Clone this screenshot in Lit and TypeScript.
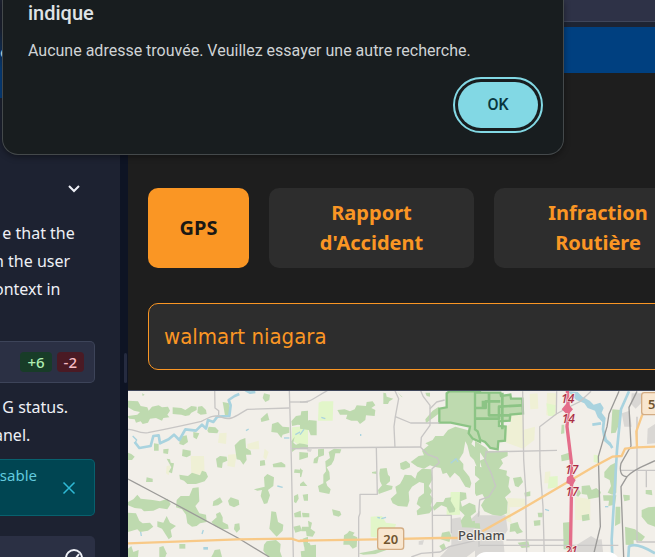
import { LitElement, html, svg, css } from "lit";
import { customElement } from "lit/decorators.js";

// Map features are grouped in three tiles, each 540 units wide.
const westWoods = [
  "0,62 30,64 38,78 58,82 62,92 72,80 92,76 102,82 120,80 126,92 118,104 124,112 106,114 102,122 84,114 66,116 60,128 44,132 38,124 24,128 20,118 4,116 0,112 0,108 28,104 36,96 18,92 0,82",
  "134,82 160,84 172,90 190,78 206,80 206,90 190,98 184,106 172,108 160,104 134,102",
  "210,80 222,78 234,90 236,102 218,104 208,98",
  "242,140 262,142 272,152 268,160 242,158 238,152", "156,170 176,166 180,186 166,196 154,192",
  "78,190 92,192 92,212 78,212", "106,208 122,206 120,222 106,220", "164,208 188,212 188,226 176,232 162,228",
  "0,218 10,222 20,230 12,240 0,240", "56,292 74,296 74,306 54,306",
  "154,284 180,288 192,278 216,286 222,272 234,276 240,290 230,304 204,312 178,312 168,302 156,298",
  "0,366 16,358 28,344 38,356 74,360 96,364 118,356 128,372 118,388 94,384 76,392 48,394 40,386 20,384 0,376",
  "0,398 24,400 34,422 44,430 66,428 76,440 60,452 36,456 28,448 0,456",
  "88,424 106,428 116,408 126,428 144,438 128,450 132,470 122,478 112,462 102,446 88,440",
  "146,360 158,348 184,348 194,324 212,322 214,364 202,378 214,400 234,404 236,426 216,430 206,438 192,440 178,430 174,404 162,388 144,382",
  "256,364 276,352 284,366 270,376 254,378", "300,362 308,352 332,360 334,374 318,382 304,376",
  "250,426 266,412 264,402 276,396 284,412 284,426 300,434 302,446 284,448 264,440",
  "320,432 334,430 336,448 326,458 318,448", "264,236 276,228 296,230 298,242 284,248 282,264 268,262",
  "320,196 336,180 352,174 354,204 368,212 370,224 354,224 356,240 346,254 336,240 326,238",
  "408,292 418,282 438,292 436,318 420,330 426,346 418,370 408,372 398,348 402,330 388,332 378,328 410,320",
  "428,416 430,394 444,396 450,426 466,434 464,452 446,470 436,460 424,446",
  "408,494 416,484 444,480 458,492 456,514 462,531 420,531 406,512",
  "408,40 426,44 424,60 412,66 404,54", "398,116 418,98 424,120 400,126",
  "432,132 450,126 464,140 484,142 484,158 464,164 460,174 448,158 430,156",
  "396,242 410,240 412,256 396,258", "434,252 460,246 472,254 472,262 436,262",
  "490,124 504,108 518,106 520,94 540,92 540,138 510,134 492,138", "500,170 496,188 504,194 516,190 540,194 540,206 508,204 492,216 490,184",
  "514,216 540,218 540,232 514,240", "500,268 524,270 520,280 498,278", "498,348 510,342 512,356 504,370 498,366",
  "524,344 540,342 540,362 528,362", "498,400 518,392 520,412 500,412", "496,440 516,436 522,452 502,458",
  "154,492 172,492 172,506 154,506", "0,506 10,498 16,516 32,510 30,531 0,531", "94,502 106,498 116,520 112,531 94,531",
  "116,236 126,238 128,248 138,250 136,260 132,280 122,276 130,262", "260,510 276,508 282,531 250,531 256,520", "524,476 540,470 540,500 528,500",
  "284,66 304,70 306,104 292,112", "196,156 214,160 206,178 196,172", "42,40 50,44 44,48",
];
const midWoods = [
  "112,90 134,88 150,94 164,88 170,76 198,78 200,66 218,64 226,76 214,84 226,90 224,108 198,106 196,120 180,132 172,122 154,122 138,116 142,104 120,104",
  "0,126 18,132 26,120 50,122 50,166 32,166 26,150 0,146", "250,38 258,40 260,50 280,56 268,64 264,72 250,72", "376,38 390,38 390,50 380,48",
  "54,208 72,206 72,226 56,232 52,250 40,250 42,236 54,228",
  "86,216 102,206 124,208 120,220 106,220 102,240 94,254 80,262 88,276 90,298 78,306 82,318 92,328 88,342 58,336 54,318 70,310 70,284 78,274 76,244 90,234",
  "0,264 8,272 4,290 0,292", "0,312 10,304 22,318 0,318", "96,388 120,394 124,404 116,410 100,406", "6,398 28,400 28,412 8,412",
  "24,422 36,428 32,446 46,456 38,470 20,468 18,454 4,454 6,440 26,440", "132,466 142,460 148,452 164,458 158,466 172,472 170,500 158,506 148,494 130,494",
  "12,492 28,488 32,496 48,494 48,531 4,531 2,514 14,512",
  "238,280 240,266 260,264 264,284 270,290 270,304 258,314 278,318 276,328 236,342 234,330 246,316 240,304",
  "300,250 318,242 330,252 330,262 310,270 302,266", "216,276 230,274 230,282 216,280",
  "272,356 290,340 286,320 300,312 308,298 314,284 334,286 346,296 352,278 366,266 394,268 398,298 386,318 396,332 390,344 400,356 392,376 398,388 388,400 352,406 350,392 362,382 350,372 356,352 372,340 372,310 358,306 336,320 326,336 328,362 322,380 294,378 278,370",
  "332,246 356,228 372,226 366,212 386,196 376,190 398,180 406,168 430,168 444,150 466,140 510,152 508,166 520,180 514,192 528,204 540,202 540,266 530,260 522,240 510,228 502,196 496,184 490,218 478,238 490,252 490,268 508,290 514,310 510,324 496,320 478,290 464,278 450,294 440,278 428,282 422,264 402,260 390,256 372,266 352,260",
  "398,382 410,366 430,366 436,354 454,352 452,362 466,386 464,396 448,398 440,382 424,376 402,392",
  "480,336 498,338 500,356 482,364 486,380 508,368 526,376 528,396 512,408 516,424 540,420 540,444 486,442 482,422 494,406 478,390",
  "376,118 398,92 416,80 418,100 402,112 378,130", "426,458 448,454 454,468 448,486 422,478", "418,498 432,490 438,504 428,514",
  "176,520 218,512 240,506 270,506 226,522 190,524", "292,36 308,52 304,50",
];
const eastWoods = [
  "0,182 34,204 40,214 98,212 98,228 78,238 84,250 72,266 96,272 94,286 104,292 100,320 108,336 90,352 98,366 96,400 78,408 52,404 28,394 18,376 30,356 22,342 4,348 0,340 0,310 14,298 0,286 0,258 20,262 14,242 28,236 16,218 0,204",
  "260,134 268,134 268,160 258,162", "388,276 406,256 426,246 424,338 412,344 398,338 408,318 404,300 388,292", "320,318 344,316 350,330 364,324 378,336 372,352 340,358 336,344 320,342",
  "412,88 436,90 436,124 422,158 408,160", "384,346 424,346 420,374 400,378 402,362 386,362",
  "422,380 436,380 436,430 420,438", "264,428 286,426 290,508 266,508", "114,294 138,290 144,306 130,322 120,318", "106,432 128,426 134,444 144,456 126,462 120,454 104,456",
  "444,344 464,346 464,360 448,364", "450,440 480,448 510,470 500,484 476,480 476,496 452,494", "540,440 518,432 500,410 500,390 520,382 540,380",
  "308,320 318,340 310,350 304,348", "512,330 530,330 532,346 512,342", "188,398 204,398 202,412 190,412", "148,338 166,334 166,348 150,350", "320,406 342,402 344,420 322,424", "128,488 160,484 164,502 140,504", "176,422 196,420 196,436 178,438", "258,226 282,218 290,238 260,244", "0,430 14,430 16,446 0,444",
];
const reserveMid = "448,34 540,34 540,186 518,176 506,160 510,140 452,128 418,128 418,86 440,82 440,40";
const reserveEast = "0,38 76,38 78,48 106,44 108,56 142,56 144,100 106,104 104,122 72,124 72,138 92,140 90,182 70,184 68,208 46,204 30,186 16,180 8,154 0,148";

const area = (pts: string[], cls: string) => pts.map((p) => svg`<polygon class=${cls} points=${p} />`);
const lines = (ds: string[], cls: string) => ds.map((d) => svg`<path class=${cls} d=${d} />`);

@customElement("town-map")
class TownMap extends LitElement {
  static styles = css`
    :host { display: block; overflow: hidden; background: #f2efe9; }
    svg { display: block; width: 100%; height: 100%; }
    .wood { fill: #bedaaf; }
    .park { fill: #e2f6c9; }
    .farm { fill: #eff0d5; }
    .town { fill: #d9d7d4; }
    .reserve { fill: #bedaaf; stroke: #8cc485; stroke-width: 7; }
    .reserve-line, .road, .rail, .river, .stream, .main, .toll { fill: none; stroke-linejoin: round; }
    .reserve-line { stroke: #8cc485; stroke-width: 8; }
    .road { stroke: #c8c6c5; stroke-width: 4; }
    .rail { stroke: #9b9a98; stroke-width: 4; }
    .river { stroke: #a9d3df; stroke-width: 8; }
    .stream { stroke: #a9d3df; stroke-width: 4; }
    .water { fill: #a9d3df; }
    .main { stroke: #f8c987; stroke-width: 7; }
    .toll { stroke: #e46d8a; stroke-width: 10; }
    .exit { fill: #e46d8a; }
    .shield { fill: #f8e6cf; stroke: #d3ac83; stroke-width: 4; }
    text { font-family: "Noto Sans", sans-serif; }
    .shield-no { font-size: 39px; font-weight: 600; fill: #70552f; text-anchor: middle; }
    .exit-no { font-size: 36px; font-style: italic; font-weight: 500; fill: #a92d42; text-anchor: middle; stroke: #f6e9e6; stroke-width: 4; paint-order: stroke; }
    .place { font-size: 13px; font-weight: 500; fill: #4c4c4c; stroke: #f2efe9; stroke-width: 2; paint-order: stroke; }
  `;
  render() {
    return html`<svg viewBox="128 391 527 166" preserveAspectRatio="xMinYMin slice" role="img" aria-label="Carte de Pelham">
      <g transform="translate(128 380) scale(0.33333)">
        ${area(["188,228 228,228 230,284 190,284", "274,160 296,158 294,192 270,188", "300,224 326,222 320,262 298,258", "358,192 392,182 394,208 358,208", "410,206 422,216 414,240 406,232", "116,258 128,256 122,286 114,280"], "farm")}
        ${area(["492,142 540,138 540,192 512,196 492,180"], "park")}
        ${area(westWoods, "wood")}
        ${lines(["M20 186L34 204L68 198L76 168L92 166L96 190L122 178L138 164L154 180L172 148L204 152L222 134L234 146L240 120L256 126L268 110L304 108L308 76L302 60L320 48L334 42", "M352 30L366 38L382 36"], "river")}
        ${lines(["M14 168L26 180L20 190", "M502 164L516 156L520 166L528 148", "M448 318L464 322", "M38 456L40 468", "M226 450L222 462", "M468 174L484 174", "M354 152L362 147"], "stream")}
        <rect class="water" x="226" y="501" width="14" height="8" />
        ${lines(["M0 148C20 146 30 162 60 158C110 148 160 138 220 124C250 108 260 104 282 112C310 122 320 110 358 88L484 84", "M260 30L261 84L272 92L272 106", "M484 30L490 240L496 531", "M486 66H540", "M492 206H540"], "road")}
        ${lines(["M0 297L130 366L330 474L424 531"], "rail")}
        ${lines(["M0 490L330 478L490 476L512 483L540 482"], "main")}
      </g>
      <g transform="translate(300 380) scale(0.33333)">
        ${area(["66,64 100,64 98,122 54,122 56,68", "0,146 20,136 24,178 10,190 0,190", "212,410 246,408 258,428 288,432 284,446 248,442 238,474 212,470", "452,336 480,336 480,404 440,406 440,382 450,374"], "park")}
        ${area(["454,416 482,412 486,442 540,392 540,500 500,531 420,531 454,494", "356,484 372,480 368,494 356,494", "20,206 36,208 32,216 22,214"], "town")}
        ${area(midWoods, "wood")}
        <polygon class="reserve" points=${reserveMid} />
        ${lines(["M64 112L76 116", "M0 164L12 148", "M232 412L240 414", "M244 416L258 412", "M452 250L468 236L474 246", "M182 162V168"], "stream")}
        ${lines(["M0 66C34 68 40 54 82 32", "M284 30L296 56L286 110L282 140L285 204", "M286 110L332 129H418", "M0 204L362 201", "M362 32L370 50L390 76V136L364 172L362 202L384 224L412 234L418 248L396 266L398 531", "M390 86L410 66L434 60", "M229 204L232 343H180V400L176 412V531", "M398 406H454V460", "M334 531L364 520L420 516L448 500L500 488L540 478"], "road")}
        ${lines(["M0 482L230 478L420 474L474 474"], "main")}
        <rect class="shield" x="233" y="444" width="78" height="64" rx="8" />
        <text class="shield-no" x="272" y="491">20</text>
      </g>
      <g transform="translate(475 380) scale(0.33333)">
        ${area(["108,100 146,96 144,150 180,140 178,180 144,206 94,188 92,140 106,132", "216,38 244,40 244,108 214,106", "96,354 152,356 152,380 100,382", "164,42 188,40 190,86 166,88", "102,370 110,430 90,420", "300,350 346,358 346,420 300,420", "210,276 226,274 226,310 208,310"], "farm")}
        ${area(["222,290 248,288 248,322 218,326", "356,224 374,226 370,250 356,246", "214,70 242,76 238,108 220,108"], "park")}
        ${area(["0,406 92,406 98,450 84,472 90,531 0,531", "296,500 348,468 368,480 364,531 290,531", "440,100 464,92 470,140 448,140", "518,146 540,132 540,190 516,192", "356,480 380,478 386,531 350,531", "470,40 500,40 502,66 482,86 468,72"], "town")}
        ${area(eastWoods, "wood")}
        <polygon class="reserve" points=${reserveEast} />
        ${lines(["M0 84H32V64H76M42 38V106H108M0 116H72V80L140 76M82 38V148M24 62V88"], "reserve-line")}
        <polygon class="water" points="278,34 308,36 322,50 344,62 356,74 376,68 386,84 380,98 392,114 388,148 396,178 408,188 404,198 386,182 380,148 382,126 368,112 360,92 338,84 328,70 304,60" />
        ${lines(["M462 34L438 88L426 210L410 480L412 531"], "river")}
        ${lines(["M352 134L378 130", "M404 190L412 204", "M460 531L462 500C480 486 520 508 540 520"], "river")}
        ${lines(["M390 380H400", "M210 388L222 392"], "stream")}
        ${lines(["M143 34L146 238L152 330L155 520", "M245 34L244 102L194 140L195 260L204 380L208 531", "M244 102L276 84L316 64L348 34", "M34 216L246 211", "M34 212L30 240L48 278L62 318L42 350L14 360L10 410", "M94 480H270", "M12 448V500", "M14 496H430", "M486 110V486H540", "M514 270V322", "M438 271H540"], "road")}
        ${lines(["M432 34L402 102L396 140L370 230L376 440L354 531", "M486 34L462 82L468 198L438 250C432 276 440 290 456 290C480 264 510 258 540 242", "M456 290L438 320L446 531"], "rail")}
        ${lines(["M22 454L160 376L356 260L412 230L440 228L450 206L486 202L540 200", "M486 202L484 154L502 104"], "main")}
        ${lines(["M277 30L280 86L276 140L289 246L290 300L286 531"], "toll")}
        <polygon class="exit" points="276,68 294,88 278,106 260,88" />
        <polygon class="exit" points="276,292 288,284 302,300 292,318 274,308" />
        <text class="exit-no" x="278" y="69">14</text>
        <text class="exit-no" x="280" y="129">14</text>
        <text class="exit-no" x="290" y="281">17</text>
        <text class="exit-no" x="291" y="348">17</text>
        <text class="exit-no" x="288" y="526">21</text>
        <rect class="shield" x="500" y="38" width="84" height="66" rx="8" />
        <text class="shield-no" x="530" y="86">5</text>
      </g>
      <text class="place" x="458" y="540">Pelham</text>
      <rect x="474" y="552" width="146" height="40" rx="12" fill="#fff" />
    </svg>`;
  }
}

@customElement("chat-panel")
class ChatPanel extends LitElement {
  static styles = css`
    :host { display: block; overflow: hidden; box-sizing: border-box; background: #1d2231; color: #eef0f6; font: 16px/28px "Noto Sans", sans-serif; }
    * { box-sizing: border-box; }
    button { display: block; padding: 0; border: 0; background: none; color: inherit; }
    svg { display: block; fill: none; stroke: currentColor; stroke-width: 2; }
    .selected { height: 71px; margin-top: 27px; padding-top: 11px; background: linear-gradient(#1d2231, #063f7d 60%); overflow: hidden; white-space: nowrap; }
    .fold { margin: 84px 0 0 67px; }
    p { margin: 0 0 0 -6px; white-space: pre; }
    .first { padding: 23px 0 38px; }
    .card { height: 42px; margin-right: 25px; display: flex; align-items: center; justify-content: flex-end; gap: 5px; padding-right: 10px; background: #2b3044; border: 1px solid #3d4459; border-left: 0; border-radius: 0 5px 5px 0; }
    .count { padding: 0 7px; border-radius: 4px; font-size: 15px; line-height: 20px; font-weight: 500; }
    .plus { background: #183c28; color: #b0efb2; }
    .minus { background: #4a1a24; color: #f5bcc4; }
    .second { padding: 10px 0; }
    .notice { height: 57px; margin-right: 25px; display: flex; justify-content: space-between; padding: 1px 18px 0 0; background: #004552; border: 1px solid #08616e; border-left: 0; border-radius: 0 5px 5px 0; color: #62cade; font-size: 15px; }
    .notice span { margin-left: -4px; }
    .notice button { align-self: center; color: #2eb9d5; }
    .prompt { height: 60px; margin: 20px 25px 0 0; padding: 13px 12px 0 0; display: flex; justify-content: flex-end; align-items: flex-start; background: #2b3044; border-radius: 0 5px 0 0; }
  `;
  render() {
    return html`
      <div class="selected">e</div>
      <button class="fold" aria-label="Collapse">
        <svg width="14" height="14" viewBox="0 0 14 14"><path d="M2 4l5 5 5-5" /></svg>
      </button>
      <p class="first">  e that the
n the user
ontext in</p>
      <div class="card"><span class="count plus">+6</span><span class="count minus">-2</span></div>
      <p class="second">  G status.
anel.</p>
      <div class="notice">
        <span>isable</span>
        <button aria-label="Dismiss"><svg width="14" height="14" viewBox="0 0 14 14"><path stroke-width="1.5" d="M1.5 1.5l11 11M12.5 1.5L1.5 12.5" /></svg></button>
      </div>
      <div class="prompt">
        <button aria-label="Accept"><svg width="18" height="18" viewBox="0 0 18 18" stroke-width="1.5"><circle cx="9" cy="9" r="8" /><path d="M5 10l3 3 6-8" /></svg></button>
      </div>`;
  }
}

@customElement("app-root")
class AppRoot extends LitElement {
  static styles = css`
    :host { position: relative; display: grid; grid-template-columns: 120px 8px minmax(0, 1fr); height: 100vh; overflow: hidden; background: #1e1e1e; }
    * { box-sizing: border-box; }
    .splitter { display: grid; align-content: start; justify-content: center; padding: 353px 0 0 2px; background: #0e1424; }
    .grip { width: 3px; height: 30px; border-radius: 2px; background: #252b40; }
    main { display: flex; flex-direction: column; min-width: 0; overflow: hidden; }
    .toolbar { flex: none; height: 22px; background: #2e3247; border-bottom: 1px solid #3f465a; }
    .banner { flex: none; height: 51px; background: #004080; border-top: 5px solid #1d2433; }
    .content { flex: none; width: 100%; min-width: 594px; padding: 115px 20px 20px; }
    nav { display: grid; grid-template-columns: 101px 205px 208px; gap: 20px; height: 80px; }
    nav button { padding: 10px 15px; border: 0; border-radius: 10px; background: #2d2d2d; color: #fa9624; font: bold 20px/30px "Noto Sans", sans-serif; }
    nav .active { background: #fa9624; color: #1a1814; }
    input { display: block; width: 100%; height: 67px; margin-top: 35px; padding: 0 15px; border: 1px solid #fa9624; border-radius: 10px; background: #2d2d2d; color: #fa9624; font: 22px/30px "DejaVu Sans Condensed", "DejaVu Sans", sans-serif; outline: 0; }
    town-map { flex: 1; border-top: 1px solid #3f465a; }
    .dialog { position: absolute; top: 0; left: 2px; width: 562px; max-width: 100%; height: 155px; padding: 0 25px; display: flex; flex-direction: column; background: #181d1f; border: 1px solid #44494b; border-top: 0; border-radius: 0 0 16px 16px; box-shadow: 0 2px 6px #0006; color: #dfe3e5; font-family: Roboto, sans-serif; }
    h1 { margin: 0; font-size: 20px; line-height: 26px; font-weight: 500; }
    .message { margin: 15px 0 0; font-size: 16px; line-height: 20px; color: #cfd3d5; }
    .ok { align-self: flex-end; width: 80px; height: 46px; margin-top: 21px; border: 0; border-radius: 23px; background: #82d8e4; color: #08363e; outline: 2px solid #82d8e4; outline-offset: 3px; font: 500 16px/20px Roboto, sans-serif; }
  `;
  render() {
    return html`
      <chat-panel></chat-panel>
      <div class="splitter"><div class="grip"></div></div>
      <main>
        <div class="toolbar"></div>
        <div class="banner"></div>
        <div class="content">
          <nav>
            <button class="active">GPS</button>
            <button>Rapport d'Accident</button>
            <button>Infraction Routière</button>
          </nav>
          <input type="text" aria-label="Adresse" value="walmart niagara" />
        </div>
        <town-map></town-map>
      </main>
      <div class="dialog" role="alertdialog" aria-labelledby="title" aria-describedby="message">
        <h1 id="title">indique</h1>
        <p class="message" id="message">Aucune adresse trouvée. Veuillez essayer une autre recherche.</p>
        <button class="ok">OK</button>
      </div>`;
  }
}
